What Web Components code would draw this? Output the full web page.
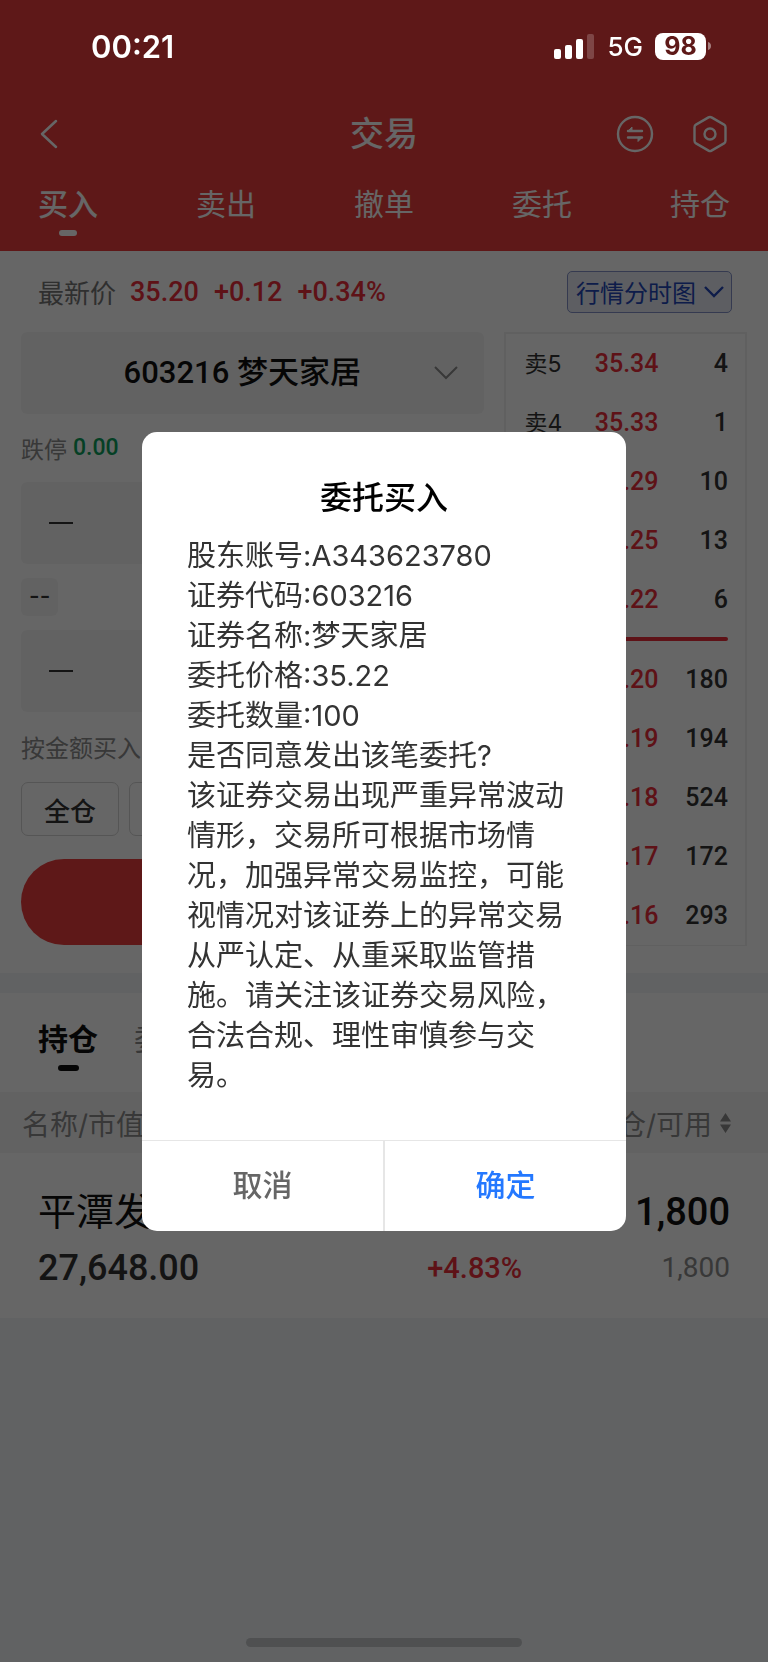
<!DOCTYPE html>
<html lang="zh-CN">
<head>
<meta charset="utf-8">
<meta name="viewport" content="width=device-width, initial-scale=1">
<title>交易</title>
<style>
  :root {
    --red: #eb3e3c;
    --up: #eb2f3b;
    --down: #0da05c;
    --ink: #333;
    --muted: #8c8c8c;
    --field: #f6f6f6;
    --line: #e6e6e6;
    --page: #f2f5f8;
    --num: Roboto, "Noto Sans CJK SC", sans-serif;
  }
  body {
    margin: 0;
    background: var(--page);
    font-family: Inter, "Noto Sans CJK SC", sans-serif;
    color: var(--ink);
  }
</style>
</head>
<body>
<trade-app>
  <phone-status slot="status" time="00:21" network="5G" battery="98"></phone-status>
  <trade-header slot="header" heading="交易" tabs="买入,卖出,撤单,委托,持仓"></trade-header>
  <quote-strip slot="quote" price="35.20" change="+0.12" percent="+0.34%">最新价</quote-strip>
  <order-form slot="form" code="603216" name="梦天家居"></order-form>
  <order-book slot="book"></order-book>
  <holdings-list slot="holdings"></holdings-list>
</trade-app>

<confirm-dialog heading="委托买入" cancel="取消" ok="确定">
  <div>股东账号:A343623780</div>
  <div>证券代码:603216</div>
  <div>证券名称:梦天家居</div>
  <div>委托价格:35.22</div>
  <div>委托数量:100</div>
  <div>是否同意发出该笔委托?</div>
  <div>该证券交易出现严重异常波动情形，交易所可根据市场情况，加强异常交易监控，可能视情况对该证券上的异常交易从严认定、从重采取监管措施。请关注该证券交易风险，合法合规、理性审慎参与交易。</div>
</confirm-dialog>

<script>
(function() {
  // Shared reset, each shadow root needs its own copy
  const BASE = `
    * { box-sizing: border-box; }
    button, input { font: inherit; color: inherit; border: 0; padding: 0; margin: 0; background: none; }
    svg { display: block; fill: none; stroke: currentColor; }
  `;

  class BaseElement extends HTMLElement {
    constructor() {
      super();
      this.attachShadow({ mode: 'open' });
    }

    connectedCallback() {
      this.shadowRoot.innerHTML = `<style>${BASE}</style>${this.template()}`;
    }
  }

  class TradeApp extends BaseElement {
    template() {
      return `
        <style>
          :host { display: flex; flex-direction: column; min-height: 100vh; }
          .top { background: var(--red); }
          .panel { background: #fff; padding-bottom: 27px; }
          .cols { display: grid; grid-template-columns: 19fr 10fr; gap: 20px; padding: 0 21px; }
          .holdings { margin-top: 20px; background: #fff; }
          .home { margin-top: auto; padding-bottom: 15px; }
          .home::before {
            content: ""; display: block; width: 36%; height: 9px; margin: 0 auto;
            border-radius: 5px; background: #c6c8cb;
          }
        </style>
        <div class="top">
          <slot name="status"></slot>
          <slot name="header"></slot>
        </div>
        <main>
          <section class="panel">
            <slot name="quote"></slot>
            <div class="cols">
              <slot name="form"></slot>
              <slot name="book"></slot>
            </div>
          </section>
          <section class="holdings"><slot name="holdings"></slot></section>
        </main>
        <div class="home"></div>
      `;
    }
  }

  class PhoneStatus extends BaseElement {
    template() {
      return `
        <style>
          /* the system bar stays bright over the dialog mask */
          :host {
            position: relative; z-index: 20;
            display: flex; align-items: center; justify-content: space-between;
            height: 92px; padding: 0 56px 0 91px; color: #fff;
          }
          .time { font-size: 31px; font-weight: 600; }
          .right { display: flex; align-items: center; }
          .net { font-size: 26px; font-weight: 500; margin: 0 12px 0 13px; }
          .bat {
            width: 51px; height: 27px; border-radius: 8px; background: #fff; color: #5e1918;
            font-size: 25px; font-weight: 700; line-height: 27px; text-align: center;
          }
        </style>
        <span class="time">${this.getAttribute('time')}</span>
        <div class="right">
          <svg width="40" height="26" viewBox="0 0 40 26" style="fill:#fff;stroke:none">
            <rect x="0" y="16" width="7" height="10" rx="2"/>
            <rect x="11" y="12" width="7" height="14" rx="2"/>
            <rect x="22" y="6" width="7" height="20" rx="2"/>
            <rect x="33" y="1" width="7" height="25" rx="2" opacity=".2"/>
          </svg>
          <span class="net">${this.getAttribute('network')}</span>
          <span class="bat">${this.getAttribute('battery')}</span>
          <svg width="6" height="10" viewBox="0 0 6 10" style="fill:#fff;stroke:none;opacity:.45">
            <path d="M2 1c2 .6 3 2 3 4s-1 3.400-3 4z"/>
          </svg>
        </div>
      `;
    }
  }

  class TradeHeader extends BaseElement {
    template() {
      const tabs = this.getAttribute('tabs').split(',');
      return `
        <style>
          :host { display: block; color: #fff; }
          .bar {
            display: grid; grid-template-columns: 1fr auto 1fr; align-items: center;
            height: 84px; padding: 0 39px;
          }
          h1 { margin: 0; font-size: 34px; font-weight: 500; line-height: 40px; }
          .tools { display: flex; justify-content: flex-end; gap: 37px; }
          .tabs { display: flex; justify-content: space-between; padding: 8px 38px 0; height: 75px; }
          .tabs button {
            display: flex; flex-direction: column; align-items: center;
            font-size: 30px; line-height: 40px; height: 52px;
          }
          .tabs .on { font-weight: 500; }
          .tabs .on::after { content: ""; width: 18px; height: 6px; border-radius: 3px; background: #fff; margin-top: 6px; }
        </style>
        <div class="bar">
          <button aria-label="返回" style="justify-self:start">
            <svg width="20" height="32" viewBox="0 0 20 32" stroke-width="2.500"><path d="M17 3 3 16l14 13" stroke-linecap="round" stroke-linejoin="round"/></svg>
          </button>
          <h1>${this.getAttribute('heading')}</h1>
          <div class="tools">
            <button aria-label="切换">
              <svg width="38" height="38" viewBox="0 0 38 38" stroke-width="2.400" stroke-linecap="round">
                <circle cx="19" cy="19" r="17"/>
                <path d="M12 16h14M12 22.500h14"/>
                <path d="M12 16l4-4v4zM26 22.500l-4 4v-4z" fill="currentColor" stroke-width="1" stroke-linejoin="round"/>
              </svg>
            </button>
            <button aria-label="设置">
              <svg width="38" height="38" viewBox="0 0 38 38" stroke-width="2.400" stroke-linejoin="round">
                <path d="M17.500 2.400q1.500-.8 3 0l12.500 7.200q1.500 1 1.500 2.600v13.600q0 1.600-1.500 2.600l-12.500 7.200q-1.500.8-3 0L5 28.400q-1.500-1-1.500-2.600V12.200q0-1.600 1.500-2.600z"/>
                <circle cx="19" cy="19" r="5.500"/>
              </svg>
            </button>
          </div>
        </div>
        <nav class="tabs">
          ${tabs.map((t, i) => `<button class="${i === 0 ? 'on' : ''}">${t}</button>`).join('')}
        </nav>
      `;
    }
  }

  class QuoteStrip extends BaseElement {
    template() {
      return `
        <style>
          :host { display: flex; align-items: center; height: 81px; padding: 0 36px 0 38px; }
          .label { font-size: 26px; color: #777; margin-right: 14px; }
          .nums { display: flex; gap: 15px; font: 500 27px/32px var(--num); color: var(--up); }
          .chart {
            display: flex; align-items: center; gap: 8px; margin-left: auto;
            height: 42px; padding: 0 7px 0 8px;
            border: 1px solid #8492c8; border-radius: 5px; background: #e8ecf6;
            font-size: 24px; color: #2448b8;
          }
        </style>
        <span class="label"><slot></slot></span>
        <div class="nums">
          <span>${this.getAttribute('price')}</span>
          <span>${this.getAttribute('change')}</span>
          <span>${this.getAttribute('percent')}</span>
        </div>
        <button class="chart">行情分时图
          <svg width="20" height="12" viewBox="0 0 20 12" stroke-width="2.400"><path d="M1 1l9 9 9-9"/></svg>
        </button>
      `;
    }
  }

  class OrderForm extends BaseElement {
    stepper(label) {
      return `
        <div class="field step">
          <button aria-label="减少${label}"><svg width="24" height="4" viewBox="0 0 24 4" stroke-width="2"><path d="M0 2h24"/></svg></button>
          <input type="text" inputmode="decimal" aria-label="${label}">
        </div>
      `;
    }

    template() {
      return `
        <style>
          :host { display: flex; flex-direction: column; }
          .field { display: flex; align-items: center; height: 82px; border-radius: 6px; background: var(--field); }
          .stock { width: 100%; padding: 0 26px 0 30px; font: 500 31px/40px var(--num); color: #111; }
          .stock span { flex: 1; text-align: center; }
          .stock svg { color: #8c8c8c; }
          .limit { display: flex; align-items: center; gap: 6px; height: 68px; font-size: 23px; color: var(--muted); }
          .limit b { font: 500 23px/30px var(--num); color: var(--down); }
          .step { padding: 0 28px; }
          .step input { flex: 1; min-width: 0; height: 100%; text-align: center; outline: 0; }
          .chip {
            align-self: flex-start; height: 38px; margin: 14px 0; padding: 0 8px; border-radius: 6px;
            background: var(--field); font: 500 23px/36px Inter, sans-serif;
          }
          .amount { height: 70px; font-size: 24px; line-height: 74px; color: var(--muted); text-align: left; align-self: flex-start; }
          .quick { display: flex; gap: 10px; }
          .quick button {
            width: 98px; height: 54px; border: 1px solid #d4d4d4; border-radius: 7px;
            font-size: 26px; font-weight: 500;
          }
          .buy { height: 86px; margin-top: 23px; border-radius: 43px; background: var(--red); }
        </style>
        <button class="field stock">
          <span>${this.getAttribute('code')} ${this.getAttribute('name')}</span>
          <svg width="24" height="14" viewBox="0 0 24 14" stroke-width="2"><path d="M1 1l11 11L23 1"/></svg>
        </button>
        <div class="limit">跌停<b>0.00</b></div>
        ${this.stepper('价格')}
        <span class="chip">--</span>
        ${this.stepper('数量')}
        <button class="amount">按金额买入</button>
        <div class="quick">
          <button>全仓</button>
          <button aria-label="半仓"></button>
          <button aria-label="三分之一仓"></button>
        </div>
        <button class="buy" aria-label="买入"></button>
      `;
    }
  }

  const ASKS = [['卖5', '35.34', 4], ['卖4', '35.33', 1], ['', '35.29', 10], ['', '35.25', 13], ['', '35.22', 6]];
  const BIDS = [['', '35.20', 180], ['', '35.19', 194], ['', '35.18', 524], ['', '35.17', 172], ['', '35.16', 293]];

  class OrderBook extends BaseElement {
    rows(list) {
      return list.map(([side, price, qty]) => `
        <tr><td class="side">${side}</td><td class="price">${price}</td><td class="qty">${qty}</td></tr>
      `).join('');
    }

    template() {
      return `
        <style>
          :host { display: block; border: solid #f0f0f0; border-width: 2px 2px 1px; padding: 0 17px 0 19px; }
          table { width: 100%; border-collapse: collapse; table-layout: fixed; }
          td { height: 59px; padding: 1px 0 0; font: 500 25px/30px var(--num); text-align: right; }
          .side { width: 44px; text-align: left; font: 400 23px/30px Inter, "Noto Sans CJK SC", sans-serif; }
          .price { width: 90px; color: var(--up); }
          hr { height: 4px; margin: 8px 0 9px; border: 0; border-radius: 2px; background: var(--up); }
        </style>
        <table aria-label="卖盘">${this.rows(ASKS)}</table>
        <hr>
        <table aria-label="买盘">${this.rows(BIDS)}</table>
      `;
    }
  }

  class HoldingsList extends BaseElement {
    template() {
      return `
        <style>
          :host { display: block; }
          .tabs { display: flex; gap: 36px; height: 99px; padding: 26px 38px 0; }
          .tabs button {
            display: flex; flex-direction: column; align-items: center;
            height: 60px; font-size: 30px; line-height: 40px; color: var(--muted);
          }
          .tabs .on { font-weight: 700; color: #111; }
          .tabs .on::after { content: ""; width: 21px; height: 6px; margin-top: 6px; border-radius: 3px; background: #111; }
          table { width: 100%; border-collapse: collapse; table-layout: fixed; }
          th { width: 34%; height: 61px; padding: 0 22px; background: var(--field); font-size: 28px; font-weight: 400; color: var(--muted); text-align: left; }
          th:last-child { width: 32%; padding-right: 37px; }
          .sort { display: flex; align-items: center; justify-content: flex-end; gap: 8px; white-space: nowrap; }
          td { padding: 31px 0 22px; text-align: right; vertical-align: top; }
          td:first-child { padding-left: 38px; text-align: left; }
          td:last-child { padding-right: 38px; }
          td div { height: 56px; line-height: 56px; font-family: var(--num); white-space: nowrap; }
          .name { font-size: 38px; color: #111; }
          .value { font-size: 36px; font-weight: 500; }
          .rate { font-size: 29px; font-weight: 500; color: var(--up); }
          .qty { font-size: 38px; font-weight: 500; color: #111; }
          .free { font-size: 28px; color: var(--muted); }
        </style>
        <div class="tabs"><button class="on">持仓</button><button>委托</button></div>
        <table>
          <thead><tr>
            <th>名称/市值</th><th></th>
            <th><span class="sort">持仓/可用
              <svg width="11" height="20" viewBox="0 0 11 20" style="fill:#8c8c8c;stroke:none"><path d="M5.500 0 11 8.500H0zM5.500 20 11 11.500H0z"/></svg>
            </span></th>
          </tr></thead>
          <tbody><tr>
            <td><div class="name">平潭发展</div><div class="value">27,648.00</div></td>
            <td><div></div><div class="rate">+4.83%</div></td>
            <td><div class="qty">1,800</div><div class="free">1,800</div></td>
          </tr></tbody>
        </table>
      `;
    }
  }

  class ConfirmDialog extends BaseElement {
    template() {
      return `
        <style>
          :host {
            position: fixed; inset: 0; z-index: 10;
            display: flex; align-items: center; justify-content: center;
            background: rgba(0, 0, 0, .6);
          }
          .box { width: 63%; border-radius: 15px; background: #fff; overflow: hidden; }
          h2 { margin: 0; padding: 46px 45px 18px; font-size: 32px; font-weight: 500; line-height: 40px; text-align: center; color: #000; }
          .body { padding: 0 45px 44px; font-size: 29px; line-height: 40px; text-spacing-trim: space-all; }
          .actions { display: flex; border-top: 1px solid var(--line); }
          .actions button { flex: 1; height: 90px; padding-bottom: 5px; font-size: 30px; font-weight: 500; color: #666; }
          .actions .ok { border-left: 2px solid var(--line); color: #2478ff; }
        </style>
        <div class="box" role="dialog" aria-modal="true" aria-labelledby="t">
          <h2 id="t">${this.getAttribute('heading')}</h2>
          <div class="body"><slot></slot></div>
          <div class="actions">
            <button class="cancel">${this.getAttribute('cancel')}</button>
            <button class="ok">${this.getAttribute('ok')}</button>
          </div>
        </div>
      `;
    }
  }

  customElements.define('trade-app', TradeApp);
  customElements.define('phone-status', PhoneStatus);
  customElements.define('trade-header', TradeHeader);
  customElements.define('quote-strip', QuoteStrip);
  customElements.define('order-form', OrderForm);
  customElements.define('order-book', OrderBook);
  customElements.define('holdings-list', HoldingsList);
  customElements.define('confirm-dialog', ConfirmDialog);
})();
</script>
</body>
</html>
